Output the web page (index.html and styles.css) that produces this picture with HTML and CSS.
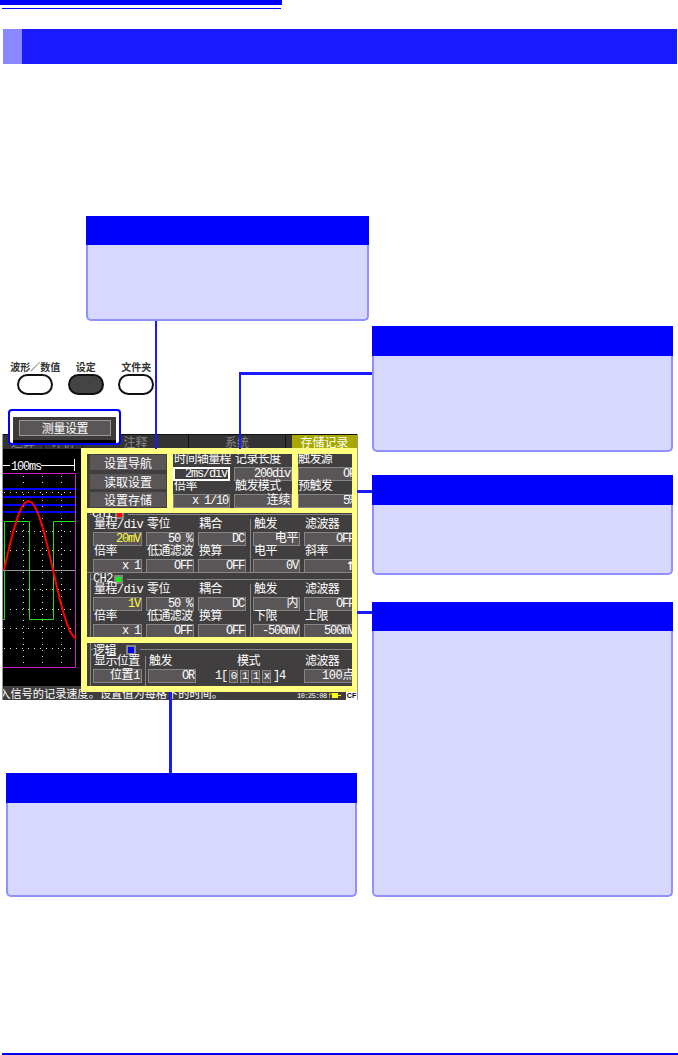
FILE: index.html
```html
<!DOCTYPE html>
<html lang="zh-CN">
<head>
    <meta charset="UTF-8">
    <title>测量设置</title>
    <link rel="stylesheet" href="styles.css">
</head>
<body>

<div class="top-rule"></div>
<div class="thin-rule"></div>

<div class="section-bar">
    <div class="section-mark"></div>
</div>

<div class="figure">

    <div class="callout callout-a">
        <div class="callout-head callout-head-short"></div>
        <div class="callout-body"></div>
    </div>
    <div class="callout callout-b">
        <div class="callout-head"></div>
        <div class="callout-body"></div>
    </div>
    <div class="callout callout-c">
        <div class="callout-head"></div>
        <div class="callout-body"></div>
    </div>
    <div class="callout callout-d">
        <div class="callout-head callout-head-short"></div>
        <div class="callout-body"></div>
    </div>
    <div class="callout callout-e">
        <div class="callout-head"></div>
        <div class="callout-body"></div>
    </div>

    <div class="keys">
        <div class="key"><span class="key-label">波形／数值</span><span class="key-pill"></span></div>
        <div class="key"><span class="key-label">设定</span><span class="key-pill key-pill-on"></span></div>
        <div class="key"><span class="key-label">文件夹</span><span class="key-pill"></span></div>
    </div>

    <!-- instrument screen -->
    <div class="screen">
        <div class="tabs">
            <div class="tab tab-1">运算</div>
            <div class="tab tab-2">评价</div>
            <div class="tab tab-3">注释</div>
            <div class="tab tab-4">系统</div>
            <div class="tab tab-active">存储记录</div>
        </div>

        <svg class="wave" viewBox="3 449 78 237" width="78" height="237">
            <rect x="3" y="449" width="78" height="237" fill="#000"/>
            <path d="M3 465.5H74M74.5 459V471" stroke="#fff" fill="none"/>
            <rect x="10" y="458" width="31" height="15" fill="#000"/>
            <text x="11" y="470" class="wave-text">100ms</text>
            <path d="M3 473.5H75.5V667.5H3" stroke="#d020c8" fill="none"/>
            <path d="M23.5 476V666M42.5 476V666M61.5 476V666" stroke="#ddd" stroke-dasharray="1 5" fill="none"/>
            <path d="M4 492.5H75M4 531.5H75M4 550.5H75M4 589.5H75M4 609.5H75M4 628.5H75M4 648.5H75" stroke="#ddd" stroke-dasharray="1 5" fill="none"/>
            <path d="M3 570.5H75" stroke="#999" fill="none"/>
            <path d="M3 489H75M3 497H75M3 505H75M3 512H75" stroke="#0000ff" stroke-width="2" fill="none"/>
            <path d="M3 619.5H4.5V521.5H29.5V619.5H53.5V521.5H75" stroke="#20e020" fill="none"/>
            <polyline points="4,570 7.5,554.6 11,540.1 14.5,527 18,516.1 21.5,507.8 25,502.7 28.5,501 32,502.7 35.5,507.8 39,516.1 42.5,527 46,540.1 49.5,554.6 53,570 56.5,585.4 60,599.9 63.5,613 67,623.9 70.5,632.2 74,637.3 76,638.5" stroke="#ff0000" stroke-width="2" fill="none"/>
        </svg>

        <div class="status">
            <div class="status-text">输入信号的记录速度。设置值为每格下的时间。</div>
            <div class="status-time">10:25:08</div>
            <svg class="status-plug" viewBox="0 0 12 7" width="12" height="7">
                <path d="M0 6V2H3M9 3.5H12" stroke="#ffff00" fill="none"/>
                <rect x="3" y="1" width="6" height="5" fill="#ffff00"/>
            </svg>
            <div class="status-cf">CF</div>
        </div>

        <!-- yellow frames lie over the screen -->
        <div class="frames">
            <div class="frame-top">
                <div class="cell nav-cell">
                    <div class="nav-btn">设置导航</div>
                    <div class="nav-btn">读取设置</div>
                    <div class="nav-btn">设置存储</div>
                </div>
                <div class="cell time-cell">
                    <div class="param"><span class="label">时间轴量程</span><span class="field field-selected">2ms/div</span></div>
                    <div class="param"><span class="label">记录长度</span><span class="field">200div</span></div>
                    <div class="param"><span class="label">倍率</span><span class="field">x 1/10</span></div>
                    <div class="param"><span class="label">触发模式</span><span class="field field-cjk">连续</span></div>
                </div>
                <div class="cell trig-cell">
                    <div class="param"><span class="label">触发源</span><span class="field">OFF</span></div>
                    <div class="param"><span class="label">预触发</span><span class="field">5%</span></div>
                </div>
            </div>

            <div class="cell ch-cell">
                <div class="group group-ch1">
                    <div class="group-head"><span class="group-title">CH1</span><span class="swatch swatch-red"></span></div>
                    <div class="ch-grid">
                        <div class="param"><span class="label">量程/div</span><span class="field field-yellow">20mV</span></div>
                        <div class="param"><span class="label">零位</span><span class="field">50 %</span></div>
                        <div class="param"><span class="label">耦合</span><span class="field">DC</span></div>
                        <div class="param param-split"><span class="label">触发</span><span class="field field-cjk">电平</span></div>
                        <div class="param"><span class="label">滤波器</span><span class="field">OFF</span></div>
                        <div class="param"><span class="label">倍率</span><span class="field">x 1</span></div>
                        <div class="param"><span class="label">低通滤波</span><span class="field">OFF</span></div>
                        <div class="param"><span class="label">换算</span><span class="field">OFF</span></div>
                        <div class="param param-split"><span class="label">电平</span><span class="field">0V</span></div>
                        <div class="param"><span class="label">斜率</span><span class="field field-arrow">↑</span></div>
                    </div>
                </div>
                <div class="group group-ch2">
                    <div class="group-head"><span class="group-title">CH2</span><span class="swatch swatch-green"></span></div>
                    <div class="ch-grid">
                        <div class="param"><span class="label">量程/div</span><span class="field field-yellow">1V</span></div>
                        <div class="param"><span class="label">零位</span><span class="field">50 %</span></div>
                        <div class="param"><span class="label">耦合</span><span class="field">DC</span></div>
                        <div class="param param-split"><span class="label">触发</span><span class="field field-cjk">内</span></div>
                        <div class="param"><span class="label">滤波器</span><span class="field">OFF</span></div>
                        <div class="param"><span class="label">倍率</span><span class="field">x 1</span></div>
                        <div class="param"><span class="label">低通滤波</span><span class="field">OFF</span></div>
                        <div class="param"><span class="label">换算</span><span class="field">OFF</span></div>
                        <div class="param param-split"><span class="label">下限</span><span class="field">-500mV</span></div>
                        <div class="param"><span class="label">上限</span><span class="field">500mV</span></div>
                    </div>
                </div>
            </div>

            <div class="cell logic-cell">
                <div class="group">
                    <div class="group-head group-head-logic"><span class="group-title">逻辑</span><span class="swatch swatch-blue"></span></div>
                    <div class="logic-grid">
                        <div class="param"><span class="label">显示位置</span><span class="field field-cjk">位置1</span></div>
                        <div class="param param-split"><span class="label">触发</span><span class="field">OR</span></div>
                        <div class="pattern">
                            <span class="label pattern-label">模式</span>
                            <div class="pattern-row">
                                <span class="pattern-end">1[</span>
                                <span class="bit">0</span>
                                <span class="bit">1</span>
                                <span class="bit">1</span>
                                <span class="bit">x</span>
                                <span class="pattern-end">]4</span>
                            </div>
                        </div>
                        <div class="param"><span class="label">滤波器</span><span class="field field-cjk">100点</span></div>
                    </div>
                </div>
            </div>
        </div>
    </div>

    <!-- the key that opens this screen, drawn over the tabs -->
    <div class="hilite">
        <div class="hilite-bar">
            <div class="hilite-btn">测量设置</div>
        </div>
    </div>

    <div class="link link-a"></div>
    <div class="link link-b-h"></div>
    <div class="link link-b-v"></div>
    <div class="link link-c"></div>
    <div class="link link-d"></div>
    <div class="link link-e"></div>
</div>

<div class="bottom-rule"></div>

</body>
</html>
```

FILE: styles.css
```css
body {
    margin: 0;
    width: 678px;
    height: 1055px;
    overflow: hidden;
    background-color: #fff;
    font-family: "Noto Sans CJK SC", sans-serif;
}
.top-rule {
    width: 282px;
    height: 5px;
    background-color: #0000ff;
}
.thin-rule {
    width: 279px;
    height: 1px;
    margin: 3px 0 0 2px;
    background-color: #0000ff;
}
.section-bar {
    height: 35px;
    margin: 20px 1px 0 3px;
    background-color: #1a1aff;
}
.section-mark {
    width: 19px;
    height: 100%;
    background-color: #8888ff;
}
.figure {
    position: relative;
    height: 989px;
}
.bottom-rule {
    height: 2px;
    margin-left: 2px;
    background-color: #0000ff;
}

/* callouts */
.callout {
    position: absolute;
    display: flex;
    flex-direction: column;
}
.callout-a { left: 86px; top: 152px; width: 283px; height: 105px; }
.callout-b { left: 372px; top: 262px; width: 301px; height: 126px; }
.callout-c { left: 372px; top: 411px; width: 301px; height: 100px; }
.callout-d { left: 372px; top: 538px; width: 301px; height: 295px; }
.callout-e { left: 6px; top: 709px; width: 351px; height: 124px; }
.callout-head {
    height: 30px;
    background-color: #0000ff;
}
.callout-head-short {
    height: 29px;
}
.callout-body {
    flex: 1;
    box-sizing: border-box;
    background-color: #d8d8ff;
    border: 2px solid #9090ff;
    border-top: none;
    border-radius: 0 0 5px 5px;
}

/* connector lines */
.link {
    position: absolute;
    background-color: #1a1aff;
}
.link-a { left: 155px; top: 257px; width: 2px; height: 128px; }
.link-b-h { left: 239px; top: 308px; width: 133px; height: 3px; }
.link-b-v { left: 239px; top: 309px; width: 2px; height: 76px; }
.link-c { left: 357px; top: 426px; width: 15px; height: 3px; }
.link-d { left: 357px; top: 547px; width: 15px; height: 3px; }
.link-e { left: 169px; top: 628px; width: 3px; height: 81px; }

/* panel keys */
.keys {
    position: absolute;
    left: 10px;
    top: 298px;
    display: flex;
}
.key {
    width: 50.5px;
    display: flex;
    flex-direction: column;
    align-items: center;
    gap: 2px;
}
.key-label {
    font-size: 10px;
    line-height: 10px;
    font-weight: bold;
    color: #333;
    white-space: nowrap;
}
.key-pill {
    box-sizing: border-box;
    width: 36px;
    height: 21px;
    background-color: #fff;
    border: 2px solid #111;
    border-radius: 11px;
}
.key-pill-on {
    background-color: #444;
}

/* highlighted menu button */
.hilite {
    position: absolute;
    left: 8px;
    top: 345px;
    box-sizing: border-box;
    width: 113px;
    height: 36px;
    padding: 6px 3px 0;
    background-color: #fff;
    border: 2px solid #0000ff;
    border-radius: 4px;
}
.hilite-bar {
    height: 20px;
    padding: 3px 5px 0 6px;
    background-color: #3c3a3a;
    border-bottom: 3px solid #000;
}
.hilite-btn {
    height: 14px;
    background-color: #5a5658;
    border: 1px solid #999;
    color: #fff;
    font-size: 12px;
    line-height: 14px;
    letter-spacing: -0.4px;
    text-align: center;
}

/* instrument screen */
.screen {
    position: absolute;
    left: 2px;
    top: 370px;
    box-sizing: border-box;
    width: 356px;
    height: 266px;
    border-left: 1px solid #999;
    border-right: 1px solid #999;
    background-color: #000;
}
.tabs {
    display: flex;
    height: 15px;
    background-color: #333;
    border-top: 1px solid #111;
    box-sizing: border-box;
    overflow: hidden;
}
.tab {
    border-right: 1px solid #111;
    color: #888;
    font-size: 12px;
    line-height: 14px;
    text-align: center;
    box-sizing: border-box;
}
.tab-1 { width: 41px; }
.tab-2 { width: 39px; }
.tab-3 { width: 106px; }
.tab-4 { width: 97px; }
.tab-active {
    width: 65px;
    margin-left: 6px;
    border-right: none;
    background-color: #a8a800;
    color: #fff;
}
.wave {
    display: block;
}
.wave-text {
    font-family: "Liberation Mono", monospace;
    font-size: 12px;
    letter-spacing: -1.2px;
    fill: #fff;
}
.status {
    display: flex;
    align-items: center;
    height: 14px;
    background-color: #3f3d3d;
    color: #fff;
    overflow: hidden;
}
.status-text {
    flex: 1;
    min-width: 0;
    font-size: 11.2px;
    line-height: 14px;
    white-space: nowrap;
    text-indent: -15px;
    overflow: hidden;
}
.status-time {
    width: 32px;
    margin-top: 5px;
    font-family: "Liberation Mono", monospace;
    font-size: 7px;
    line-height: 8px;
    letter-spacing: -0.5px;
}
.status-plug {
    margin: 5px 5px 0 0;
}
.status-cf {
    width: 11px;
    height: 8px;
    margin-top: 5px;
    background-color: #fff;
    color: #000;
    font-family: "Liberation Sans", sans-serif;
    font-size: 7px;
    font-weight: bold;
    line-height: 8px;
    text-align: center;
}

/* yellow overlay */
.frames {
    position: absolute;
    left: 78px;
    top: 14px;
    box-sizing: border-box;
    width: 276px;
    height: 244px;
    padding: 6px 5px 6px 6px;
    display: flex;
    flex-direction: column;
    background-color: #ffff80;
}
.cell {
    overflow: hidden;
    background-color: #403e3e;
}
.frame-top {
    display: flex;
    gap: 6px;
    height: 54px;
}
.nav-cell {
    box-sizing: border-box;
    width: 80px;
    padding: 1px 1px 1px 3px;
    display: flex;
    flex-direction: column;
    justify-content: space-between;
}
.nav-btn {
    box-sizing: border-box;
    height: 15px;
    background-color: #5a5658;
    color: #fff;
    font-size: 12px;
    line-height: 15px;
    text-align: center;
}
.time-cell {
    width: 119px;
    display: grid;
    grid-template-columns: 57px 58px;
    column-gap: 4px;
}
.trig-cell {
    width: 54px;
}
.trig-cell .label {
    padding-left: 0;
}
.trig-cell .field {
    width: 60px;
    padding-left: 44px;
    text-align: left;
}

/* one label with its value box */
.param {
    min-width: 0;
}
.label {
    display: block;
    height: 13px;
    padding-left: 1px;
    color: #fff;
    font-family: "Liberation Mono", "Noto Sans CJK SC", monospace;
    font-size: 12px;
    line-height: 13px;
    letter-spacing: -0.6px;
    white-space: nowrap;
}
.field {
    display: block;
    box-sizing: border-box;
    height: 14px;
    padding-right: 1px;
    background-color: #5a5658;
    border: 1px solid #858585;
    color: #fff;
    font-family: "Liberation Mono", "Noto Sans CJK SC", monospace;
    font-size: 12px;
    line-height: 12px;
    letter-spacing: -1.2px;
    text-align: right;
    white-space: nowrap;
}
.field-selected {
    border: 2px solid #fff;
    background-color: #403e3e;
    line-height: 10px;
}
.field-yellow {
    color: #ffff40;
}
.field-cjk {
    letter-spacing: -0.4px;
}
.field-arrow {
    font-family: "DejaVu Sans", sans-serif;
    font-weight: bold;
}
.param-split {
    padding-left: 2px;
    border-left: 1px solid #858585;
    box-sizing: border-box;
}

/* CH and logic groups */
.ch-cell {
    height: 124px;
    margin-top: 5px;
}
.group {
    margin-left: 3px;
}
.group-ch1 {
    height: 63px;
    margin-top: -4px;
    border-bottom: 1px solid #858585;
    margin-left: 0;
    padding-left: 3px;
}
.group-head {
    display: flex;
    align-items: center;
    height: 10px;
    border-left: 1px solid #858585;
}
.group-head::before {
    content: "";
    width: 2px;
    height: 1px;
    background-color: #858585;
}
.group-head::after {
    content: "";
    flex: 1;
    height: 1px;
    margin-left: 4px;
    background-color: #858585;
}
.group-title {
    width: 21px;
    color: #fff;
    font-family: "Liberation Mono", monospace;
    font-size: 12px;
    line-height: 10px;
    letter-spacing: -0.6px;
}
.swatch {
    box-sizing: border-box;
    width: 9px;
    height: 9px;
    border: 2px solid #858585;
}
.swatch-red { background-color: #ff0000; margin-left: 2px; }
.swatch-green { background-color: #00ff00; }
.swatch-blue { background-color: #0000ff; width: 10px; height: 10px; margin-left: 10px; }
.group-ch2 {
    margin-top: 1px;
}
.ch-grid {
    display: grid;
    grid-template-columns: 49px 48px 48px 50px 52px;
    column-gap: 4px;
    padding-left: 3px;
    border-left: 1px solid transparent;
    width: 270px;
}
.group-ch1 .group-head {
    border-left: none;
}
.group-ch1 .ch-grid {
    border-left: none;
    padding-left: 3px;
}
.group-ch2 .ch-grid {
    border-left-color: #858585;
    padding-left: 2px;
}
.logic-cell {
    height: 43px;
    margin-top: 6px;
}
.group-head-logic {
    height: 13px;
}
.group-head-logic .group-title {
    width: auto;
    font-family: "Noto Sans CJK SC", sans-serif;
    line-height: 13px;
}
.logic-grid {
    display: grid;
    grid-template-columns: 49px 54px 108px 52px;
    padding-left: 2px;
    border-left: 1px solid #858585;
    width: 270px;
    height: 30px;
}
.logic-grid .param-split {
    margin-left: 3px;
}
.pattern {
    display: flex;
    flex-direction: column;
    align-items: center;
}
.pattern-label {
    margin-left: -4px;
}
.pattern-row {
    display: flex;
    align-items: center;
    gap: 2px;
    height: 14px;
    color: #fff;
    font-family: "Liberation Mono", monospace;
    font-size: 12px;
    letter-spacing: -1.2px;
}
.bit {
    box-sizing: border-box;
    width: 9px;
    height: 13px;
    background-color: #5a5658;
    border: 1px solid #858585;
    font-size: 11px;
    line-height: 11px;
    text-align: center;
}
```
